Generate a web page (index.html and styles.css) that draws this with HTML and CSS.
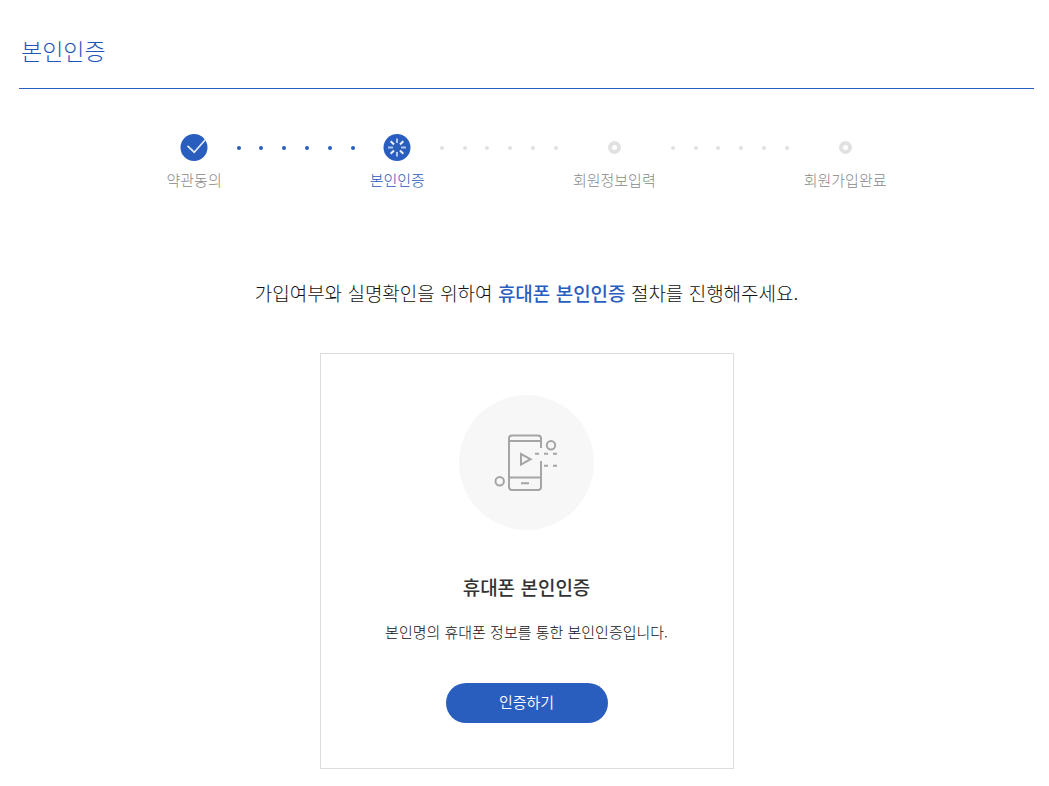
FILE: index.html
```html
<!DOCTYPE html>
<html lang="ko">
<head>
<meta charset="utf-8">
<meta name="viewport" content="width=device-width, initial-scale=1">
<title>본인인증</title>
<link rel="stylesheet" href="styles.css">
</head>
<body>
<main class="page">
  <h1 class="page-title">본인인증</h1>

  <ol class="steps">
    <li class="step">
      <span class="step-icon">
        <svg width="28" height="27" viewBox="0 0 28 27" aria-hidden="true">
          <circle cx="14" cy="13.500" r="13.500" fill="#295ebf"/>
          <path d="M7.500 11.800L14.200 18.200L25.300 5.800" fill="none" stroke="#e4ebf7" stroke-width="1.700"/>
        </svg>
      </span>
      <span class="step-label">약관동의</span>
    </li>
    <li class="dots dots-done" aria-hidden="true"><i></i><i></i><i></i><i></i><i></i><i></i></li>
    <li class="step step-current" aria-current="step">
      <span class="step-icon">
        <svg width="28" height="27" viewBox="0 0 28 27" aria-hidden="true">
          <circle cx="14" cy="13.500" r="13.500" fill="#295ebf"/>
          <g fill="none" stroke-width="2">
            <path d="M14 4.500v4.500M14 18v4.500M5 13.500h5M18 13.500h5" stroke="#b4c7e9"/>
            <path d="M7.700 7.200l3.300 3.300M17 16.500l3.300 3.300M20.300 7.200l-3.300 3.300M11 16.500l-3.300 3.300" stroke="#edf2fa"/>
          </g>
        </svg>
      </span>
      <span class="step-label">본인인증</span>
    </li>
    <li class="dots" aria-hidden="true"><i></i><i></i><i></i><i></i><i></i><i></i></li>
    <li class="step">
      <span class="step-icon"><span class="ring"></span></span>
      <span class="step-label">회원정보입력</span>
    </li>
    <li class="dots" aria-hidden="true"><i></i><i></i><i></i><i></i><i></i><i></i></li>
    <li class="step">
      <span class="step-icon"><span class="ring"></span></span>
      <span class="step-label">회원가입완료</span>
    </li>
  </ol>

  <p class="lead">가입여부와 실명확인을 위하여 <strong>휴대폰 본인인증</strong> 절차를 진행해주세요.</p>

  <section class="card">
    <div class="card-icon">
      <svg width="135" height="135" viewBox="0 0 135 135" fill="none" stroke="#a5a5a5" stroke-width="2" aria-hidden="true">
        <path d="M82 53V43.500Q82 40.500 79 40.500H53Q50 40.500 50 43.500V92Q50 95 53 95H79Q82 95 82 92V66"/>
        <path d="M50 46H82M50 82.500H82M62 88.300H70"/>
        <path d="M62 59V69.500L71.500 64.200Z"/>
        <circle cx="92" cy="50.200" r="4.200"/>
        <circle cx="40.700" cy="86.300" r="4.200"/>
        <path d="M76 58.700H80M85 58.700H89M94 58.700H98M85 70.800H89M94 70.800H98"/>
      </svg>
    </div>
    <h2 class="card-title">휴대폰 본인인증</h2>
    <p class="card-text">본인명의 휴대폰 정보를 통한 본인인증입니다.</p>
    <button class="verify" type="button">인증하기</button>
  </section>
</main>
</body>
</html>
```
FILE: styles.css
```css
* {
  box-sizing: border-box;
}

body {
  margin: 0;
  background: #fff;
  color: #111;
  font-family: "Noto Sans CJK KR", sans-serif;
  font-weight: 300;
}

.page {
  padding: 32px 15px 17px 19px;
}

.page-title {
  margin: 0;
  padding: 0 2px 20px;
  border-bottom: 1px solid #295ebf;
  color: #1f56bb;
  font-size: 23px;
  font-weight: 300;
  line-height: 36px;
}

.steps {
  display: flex;
  justify-content: center;
  gap: 15px;
  margin: 45px 0 0;
  padding: 0;
  list-style: none;
}

.step {
  display: flex;
  flex-direction: column;
  align-items: center;
  color: #888;
  font-size: 15px;
  line-height: 22px;
}

.step-icon {
  display: flex;
  align-items: center;
  justify-content: center;
  height: 27px;
  margin-bottom: 8px;
}

.step-current {
  color: #1f56bb;
}

.ring {
  width: 13px;
  height: 13px;
  border: 4px solid #e1e1e1;
  border-radius: 50%;
}

.dots {
  display: flex;
  align-items: center;
  justify-content: space-between;
  width: 118px;
  height: 28px;
  color: #e1e1e1;
}

.dots-done {
  color: #295ebf;
}

.dots i {
  width: 4px;
  height: 4px;
  border-radius: 50%;
  background: currentColor;
}

.lead {
  margin: 88px 0 0;
  font-size: 19px;
  line-height: 28px;
  text-align: center;
}

.lead strong {
  color: #295ebf;
  font-weight: 500;
}

.card {
  display: flex;
  flex-direction: column;
  align-items: center;
  width: 100%;
  max-width: 414px;
  margin: 46px auto 0;
  padding: 41px 20px 45px;
  border: 1px solid #ddd;
  text-align: center;
}

.card-icon {
  height: 135px;
  border-radius: 50%;
  background: #f7f7f7;
}

.card-title {
  margin: 43px 0 0;
  color: #333;
  font-size: 19px;
  font-weight: 500;
  line-height: 28px;
}

.card-text {
  margin: 19px 0 0;
  font-size: 15px;
  line-height: 24px;
}

.verify {
  width: 162px;
  height: 40px;
  margin-top: 39px;
  padding: 0 0 4px;
  border: 0;
  border-radius: 20px;
  background: #295ebf;
  color: #fff;
  font: inherit;
  font-size: 15px;
  font-weight: 350;
}
```
